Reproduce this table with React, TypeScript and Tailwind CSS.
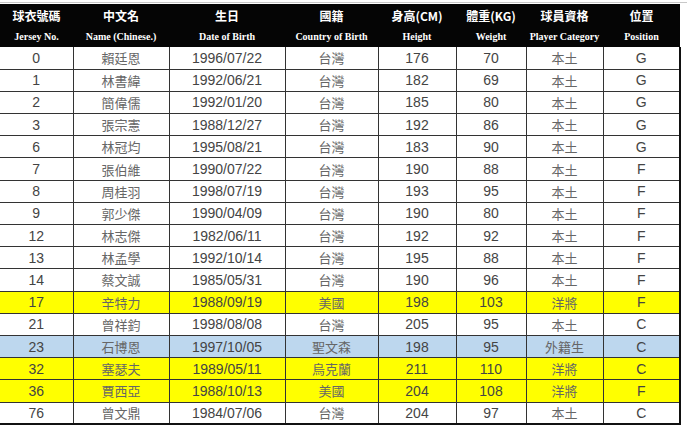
import React from "react";

type Player = {
  no: string;
  name: string;
  dob: string;
  country: string;
  height: string;
  weight: string;
  category: string;
  pos: string;
  tone?: "yellow" | "blue";
};

const players: Player[] = [
  { no: "0", name: "賴廷恩", dob: "1996/07/22", country: "台灣", height: "176", weight: "70", category: "本土", pos: "G" },
  { no: "1", name: "林書緯", dob: "1992/06/21", country: "台灣", height: "182", weight: "69", category: "本土", pos: "G" },
  { no: "2", name: "簡偉儒", dob: "1992/01/20", country: "台灣", height: "185", weight: "80", category: "本土", pos: "G" },
  { no: "3", name: "張宗憲", dob: "1988/12/27", country: "台灣", height: "192", weight: "86", category: "本土", pos: "G" },
  { no: "6", name: "林冠均", dob: "1995/08/21", country: "台灣", height: "183", weight: "90", category: "本土", pos: "G" },
  { no: "7", name: "張伯維", dob: "1990/07/22", country: "台灣", height: "190", weight: "88", category: "本土", pos: "F" },
  { no: "8", name: "周桂羽", dob: "1998/07/19", country: "台灣", height: "193", weight: "95", category: "本土", pos: "F" },
  { no: "9", name: "郭少傑", dob: "1990/04/09", country: "台灣", height: "190", weight: "80", category: "本土", pos: "F" },
  { no: "12", name: "林志傑", dob: "1982/06/11", country: "台灣", height: "192", weight: "92", category: "本土", pos: "F" },
  { no: "13", name: "林孟學", dob: "1992/10/14", country: "台灣", height: "195", weight: "88", category: "本土", pos: "F" },
  { no: "14", name: "蔡文誠", dob: "1985/05/31", country: "台灣", height: "190", weight: "96", category: "本土", pos: "F" },
  { no: "17", name: "辛特力", dob: "1988/09/19", country: "美國", height: "198", weight: "103", category: "洋將", pos: "F", tone: "yellow" },
  { no: "21", name: "曾祥鈞", dob: "1998/08/08", country: "台灣", height: "205", weight: "95", category: "本土", pos: "C" },
  { no: "23", name: "石博恩", dob: "1997/10/05", country: "聖文森", height: "198", weight: "95", category: "外籍生", pos: "C", tone: "blue" },
  { no: "32", name: "塞瑟夫", dob: "1989/05/11", country: "烏克蘭", height: "211", weight: "110", category: "洋將", pos: "C", tone: "yellow" },
  { no: "36", name: "賈西亞", dob: "1988/10/13", country: "美國", height: "204", weight: "108", category: "洋將", pos: "F", tone: "yellow" },
  { no: "76", name: "曾文鼎", dob: "1984/07/06", country: "台灣", height: "204", weight: "97", category: "本土", pos: "C" },
];

const columns = [
  { zh: "球衣號碼", en: "Jersey No.", w: "w-[73px]" },
  { zh: "中文名", en: "Name (Chinese.)", w: "w-[96px]" },
  { zh: "生日", en: "Date of Birth", w: "w-[116px]" },
  { zh: "國籍", en: "Country of Birth", w: "w-[93px]" },
  { zh: "身高(CM)", en: "Height", w: "w-[78px]" },
  { zh: "體重(KG)", en: "Weight", w: "w-[70px]" },
  { zh: "球員資格", en: "Player Category", w: "w-[77px]" },
  { zh: "位置", en: "Position", w: "w-[77px]" },
];

const toneClass = {
  yellow: "bg-[#ffff00]",
  blue: "bg-[#bdd7ee]",
};

const cell = "h-[22.2px] p-0 text-center leading-none border-b border-[#333]";
const num = "font-['Liberation_Sans','Noto_Sans_CJK_TC',sans-serif] text-[14px] text-[#444]";
const zh = "font-['Noto_Sans_CJK_TC',sans-serif] text-[13px] text-[#666]";

export default function App() {
  return (
    <div className="w-[687px] h-[428px] bg-white overflow-hidden pt-[2px]">
      <div className="border-t border-[#c8c8c8] pt-[1px]">
        <table className="table-fixed border-collapse w-[680px]">
          <colgroup>
            {columns.map((c) => (
              <col key={c.en} className={c.w} />
            ))}
          </colgroup>
          <thead className="bg-[#050505] text-white">
            <tr>
              {columns.map((c) => (
                <th
                  key={c.zh}
                  className="h-[23px] p-0 text-center align-middle font-['Noto_Sans_CJK_TC',sans-serif] text-[12px] font-semibold leading-none"
                >
                  {c.zh}
                </th>
              ))}
            </tr>
            <tr>
              {columns.map((c) => (
                <th
                  key={c.en}
                  className="h-[20px] p-0 text-center align-middle font-['Liberation_Serif',serif] text-[10px] font-bold leading-none"
                >
                  {c.en}
                </th>
              ))}
            </tr>
          </thead>
          <tbody className="border-r-2 border-b-2 border-[#111]">
            {players.map((p) => (
              <tr key={p.no} className={p.tone ? toneClass[p.tone] : "bg-white"}>
                <td className={`${cell} border-r ${num}`}>{p.no}</td>
                <td className={`${cell} border-r ${zh}`}>{p.name}</td>
                <td className={`${cell} border-r ${num}`}>{p.dob}</td>
                <td className={`${cell} border-r ${zh}`}>{p.country}</td>
                <td className={`${cell} border-r ${num}`}>{p.height}</td>
                <td className={`${cell} border-r ${num}`}>{p.weight}</td>
                <td className={`${cell} border-r ${zh}`}>{p.category}</td>
                <td className={`${cell} ${num}`}>{p.pos}</td>
              </tr>
            ))}
          </tbody>
        </table>
      </div>
    </div>
  );
}
